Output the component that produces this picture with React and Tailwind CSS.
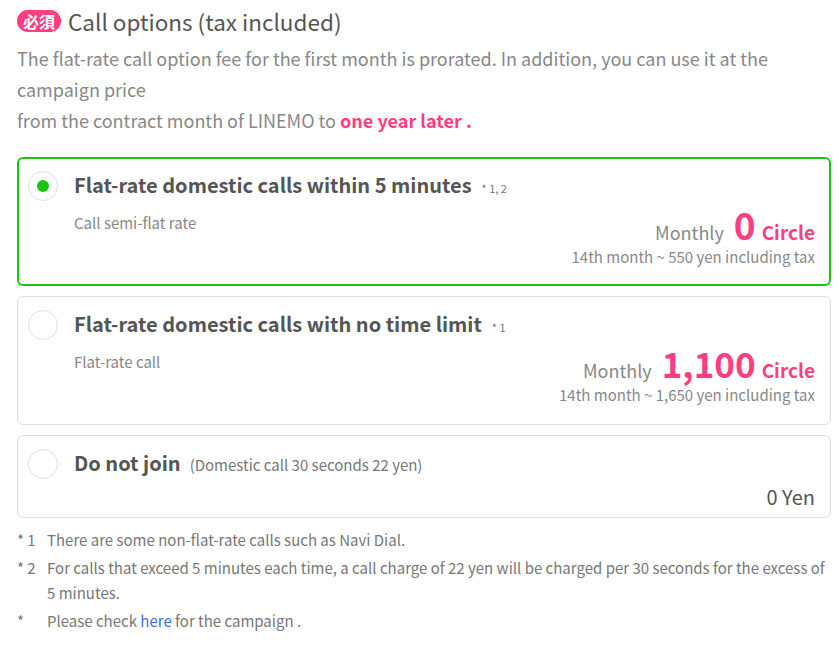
const font = { fontFamily: '"Noto Sans CJK JP", "Noto Sans", sans-serif' }

const Radio = ({ checked }) => (
  <span className="mt-[1px] flex h-[30px] w-[30px] shrink-0 items-center justify-center rounded-full border border-[#e0e0e0] bg-white">
    {checked && <span className="h-[12px] w-[12px] rounded-full bg-[#17c517]" />}
  </span>
)

const Option = ({ checked, title, note, sub, price, tall = true, children }) => (
  <div
    className={`rounded-[6px] bg-white ${checked ? 'border-2 border-[#17c517] px-[9px] pt-[11px]' : 'border border-[#dedede] px-[10px] pt-[12px]'} ${tall ? 'h-[129px]' : 'h-[83px]'}`}
  >
    <div className="flex items-start gap-[16px]">
      <Radio checked={checked} />
      <div className="flex-1">
        <div className="flex items-baseline text-[#555] leading-[30px]">
          <span className="text-[20px] font-bold">{title}</span>
          {note && <span className="ml-[10px] text-[11px] text-[#777]">{note}</span>}
          {children}
        </div>
        {sub && <div className="mt-[9px] text-[15px] leading-[22px] text-[#888]">{sub}</div>}
      </div>
    </div>
    {price}
  </div>
)

const Price = ({ amount, later, size }) => (
  <div className="-mt-[28px] pr-[5px] text-right">
    <div className="flex items-baseline justify-end leading-[36px]">
      <span className="mr-[10px] text-[18px] text-[#888]">Monthly</span>
      <span className={`${size} font-bold text-[#ff3d80]`}>{amount}</span>
      <span className="ml-[6px] text-[19px] font-bold text-[#ff3d80]">Circle</span>
    </div>
    <div className="-mt-[3px] text-[15px] leading-[20px] text-[#888]">{later}</div>
  </div>
)

export default function App() {
  return (
    <div className="w-[840px] bg-white pl-[17px] pr-[9px] pt-[6px]" style={font}>
      <div className="flex items-center">
        <span className="rounded-full bg-[#ff3d80] px-[6px] text-[16px] font-bold leading-[22px] text-white">必須</span>
        <h2 className="ml-[7px] text-[22.5px] leading-[30px] text-[#555]">Call options (tax included)</h2>
      </div>
      <p className="mt-[7px] text-[18px] leading-[31px] text-[#888]">
        The flat-rate call option fee for the first month is prorated. In addition, you can use it at the campaign price
        <br />
        from the contract month of LINEMO to <span className="font-bold text-[#ff3d80]">one year later .</span>
      </p>

      <div className="mt-[21px] flex flex-col gap-[10px]">
        <Option
          checked
          title="Flat-rate domestic calls within 5 minutes"
          note="* 1, 2"
          sub="Call semi-flat rate"
          price={<Price amount="0" size="text-[37px]" later="14th month ~ 550 yen including tax" />}
        />
        <Option
          title="Flat-rate domestic calls with no time limit"
          note="* 1"
          sub="Flat-rate call"
          price={<Price amount="1,100" size="text-[35px]" later="14th month ~ 1,650 yen including tax" />}
        />
        <Option
          tall={false}
          title="Do not join"
          price={<div className="mt-[3px] pr-[5px] text-right text-[20px] leading-[28px] text-[#555]">0 Yen</div>}
        >
          <span className="ml-[9px] text-[15px] text-[#777]">(Domestic call 30 seconds 22 yen)</span>
        </Option>
      </div>

      <ul className="mt-[9px] flex flex-col gap-[3px] text-[15px] leading-[25px] text-[#777]">
        <li className="flex">
          <span className="w-[30px] shrink-0">* 1</span>
          <span>There are some non-flat-rate calls such as Navi Dial.</span>
        </li>
        <li className="flex">
          <span className="w-[30px] shrink-0">* 2</span>
          <span>For calls that exceed 5 minutes each time, a call charge of 22 yen will be charged per 30 seconds for the excess of 5 minutes.</span>
        </li>
        <li className="flex">
          <span className="w-[30px] shrink-0">*</span>
          <span>
            Please check <a className="text-[#3b6fe0]">here</a> for the campaign .
          </span>
        </li>
      </ul>
    </div>
  )
}
